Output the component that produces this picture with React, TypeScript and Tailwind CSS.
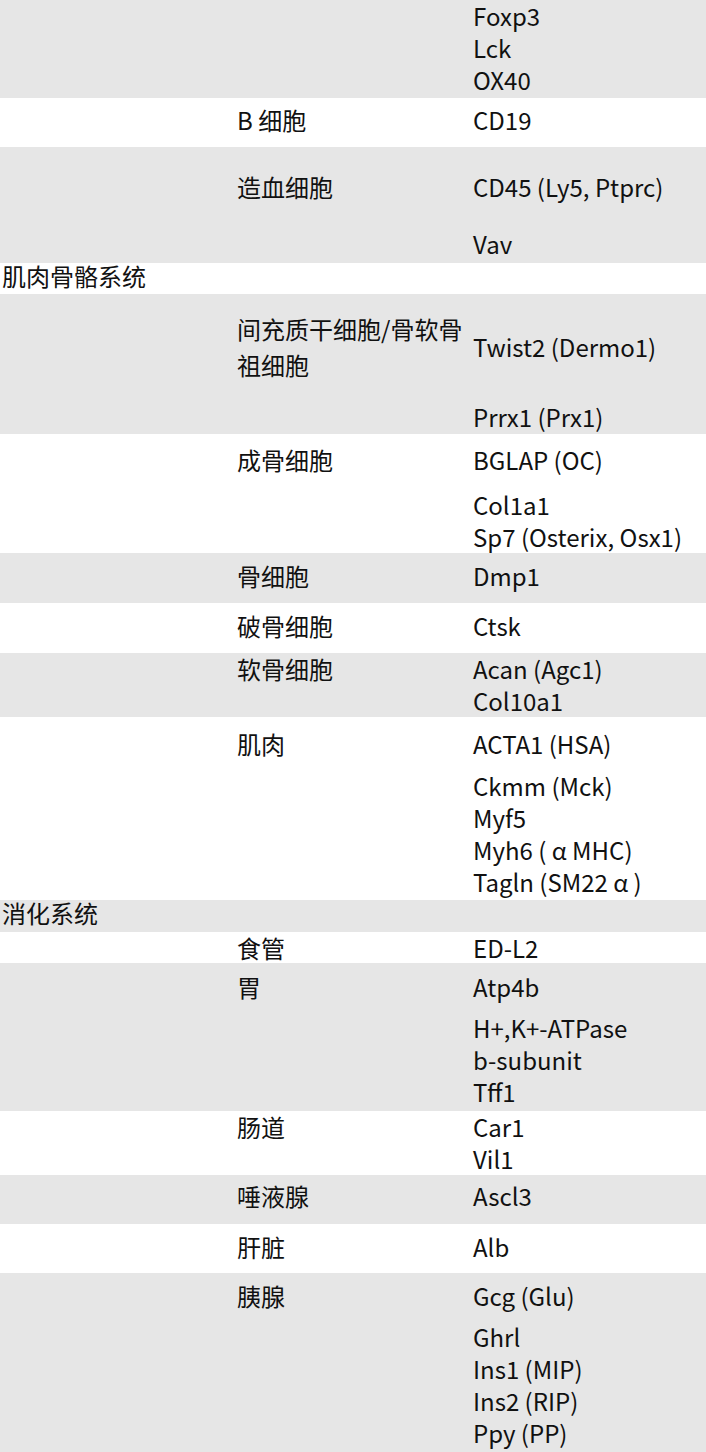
import React from "react";

type Para = { cls?: string; lines: string[] };
type Cell = { cls?: string; paras: Para[] };
type RowT = { gray: boolean; c1?: Cell; c2?: Cell; c3?: Cell };

const rows: RowT[] = [
  { gray: true, c3: { cls: "pb-[2px]", paras: [{ lines: ["Foxp3", "Lck", "OX40"] }] } },
  {
    gray: false,
    c2: { cls: "pt-[6px]", paras: [{ lines: ["B 细胞"] }] },
    c3: { cls: "pt-[6px] pb-[11px]", paras: [{ lines: ["CD19"] }] },
  },
  {
    gray: true,
    c2: { cls: "pt-[24px]", paras: [{ lines: ["造血细胞"] }] },
    c3: {
      cls: "pt-[24px] pb-[3px]",
      paras: [{ lines: ["CD45 (Ly5, Ptprc)"] }, { cls: "mt-[25px]", lines: ["Vav"] }],
    },
  },
  { gray: false, c1: { cls: "leading-[25px] pb-[6px]", paras: [{ lines: ["肌肉骨骼系统"] }] } },
  {
    gray: true,
    c2: { cls: "pt-[17px] leading-[36px] pr-[2px]", paras: [{ lines: ["间充质干细胞/骨软骨祖细胞"] }] },
    c3: {
      cls: "pt-[37px] pb-[1px]",
      paras: [{ lines: ["Twist2 (Dermo1)"] }, { cls: "mt-[38px]", lines: ["Prrx1 (Prx1)"] }],
    },
  },
  {
    gray: false,
    c2: { cls: "pt-[10px]", paras: [{ lines: ["成骨细胞"] }] },
    c3: {
      cls: "pt-[10px]",
      paras: [{ lines: ["BGLAP (OC)"] }, { cls: "mt-[13px]", lines: ["Col1a1", "Sp7 (Osterix, Osx1)"] }],
    },
  },
  {
    gray: true,
    c2: { cls: "pt-[7px]", paras: [{ lines: ["骨细胞"] }] },
    c3: { cls: "pt-[7px] pb-[11px]", paras: [{ lines: ["Dmp1"] }] },
  },
  {
    gray: false,
    c2: { cls: "pt-[7px]", paras: [{ lines: ["破骨细胞"] }] },
    c3: { cls: "pt-[7px] pb-[11px]", paras: [{ lines: ["Ctsk"] }] },
  },
  {
    gray: true,
    c2: { paras: [{ lines: ["软骨细胞"] }] },
    c3: { paras: [{ lines: ["Acan (Agc1)", "Col10a1"] }] },
  },
  {
    gray: false,
    c2: { cls: "pt-[11px]", paras: [{ lines: ["肌肉"] }] },
    c3: {
      cls: "pt-[11px] pb-[2px]",
      paras: [
        { lines: ["ACTA1 (HSA)"] },
        { cls: "mt-[10px]", lines: ["Ckmm (Mck)", "Myf5", "Myh6 ( α MHC)", "Tagln (SM22 α )"] },
      ],
    },
  },
  { gray: true, c1: { cls: "leading-[26px] pb-[6px]", paras: [{ lines: ["消化系统"] }] } },
  {
    gray: false,
    c2: { cls: "leading-[31px]", paras: [{ lines: ["食管"] }] },
    c3: { cls: "leading-[31px]", paras: [{ lines: ["ED-L2"] }] },
  },
  {
    gray: true,
    c2: { cls: "pt-[8px]", paras: [{ lines: ["胃"] }] },
    c3: {
      cls: "pt-[8px] pb-[3px]",
      paras: [{ lines: ["Atp4b"] }, { cls: "mt-[9px]", lines: ["H+,K+-ATPase", "b-subunit", "Tff1"] }],
    },
  },
  {
    gray: false,
    c2: { paras: [{ lines: ["肠道"] }] },
    c3: { paras: [{ lines: ["Car1", "Vil1"] }] },
  },
  {
    gray: true,
    c2: { cls: "pt-[5px]", paras: [{ lines: ["唾液腺"] }] },
    c3: { cls: "pt-[5px] pb-[12px]", paras: [{ lines: ["Ascl3"] }] },
  },
  {
    gray: false,
    c2: { cls: "pt-[7px]", paras: [{ lines: ["肝脏"] }] },
    c3: { cls: "pt-[7px] pb-[10px]", paras: [{ lines: ["Alb"] }] },
  },
  {
    gray: true,
    c2: { cls: "pt-[7px]", paras: [{ lines: ["胰腺"] }] },
    c3: {
      cls: "pt-[7px] pb-[11px]",
      paras: [
        { lines: ["Gcg (Glu)"] },
        { cls: "mt-[9px]", lines: ["Ghrl", "Ins1 (MIP)", "Ins2 (RIP)", "Ppy (PP)"] },
      ],
    },
  },
];

function CellView({ cell }: { cell?: Cell }) {
  if (!cell) return <div />;
  return (
    <div className={cell.cls ?? ""}>
      {cell.paras.map((p, i) => (
        <div key={i} className={p.cls ?? ""}>
          {p.lines.map((l, j) => (
            <div key={j} className="whitespace-pre">
              {l}
            </div>
          ))}
        </div>
      ))}
    </div>
  );
}

export default function App() {
  return (
    <div className="w-[706px] bg-white text-[24px] leading-[32px] text-[#111111] font-['Noto_Sans_CJK_SC','Noto_Sans',sans-serif]">
      {rows.map((r, i) => (
        <div
          key={i}
          className={
            r.gray
              ? "grid grid-cols-[237px_236px_1fr] bg-[#e6e6e6]"
              : "grid grid-cols-[237px_236px_1fr] bg-white"
          }
        >
          <div className="pl-[2px]">
            <CellView cell={r.c1} />
          </div>
          <div className="[&_div]:whitespace-normal">
            <CellView cell={r.c2} />
          </div>
          <div>
            <CellView cell={r.c3} />
          </div>
        </div>
      ))}
    </div>
  );
}
